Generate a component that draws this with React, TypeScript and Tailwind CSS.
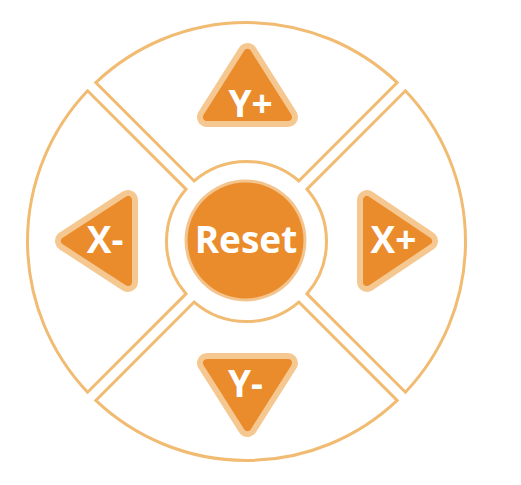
import React from "react";

const CX = 246.5;
const CY = 241.5;
const R_OUT = 219;
const R_IN = 80;
const GAP = 5.8;

// top quarter of the ring, the rest are rotations of it
function segmentPath() {
  const s = Math.SQRT1_2;
  const T = Math.sqrt(R_OUT * R_OUT - GAP * GAP);
  const t = Math.sqrt(R_IN * R_IN - GAP * GAP);
  const p = (x: number, y: number) => `${(CX + x).toFixed(2)} ${(CY + y).toFixed(2)}`;
  return [
    `M ${p((GAP - T) * s, (-GAP - T) * s)}`,
    `A ${R_OUT} ${R_OUT} 0 0 1 ${p((T - GAP) * s, (-GAP - T) * s)}`,
    `L ${p((t - GAP) * s, (-GAP - t) * s)}`,
    `A ${R_IN} ${R_IN} 0 0 0 ${p((GAP - t) * s, (-GAP - t) * s)}`,
    "Z",
  ].join(" ");
}

const arrows = [
  { label: "Y+", pts: "207,117 288,117 247.5,53", tx: 250.5, ty: 117 },
  { label: "Y-", pts: "207,363 288,363 247.5,427", tx: 245.5, ty: 397 },
  { label: "X-", pts: "65,241 128,200 128,282", tx: 105, ty: 253 },
  { label: "X+", pts: "367,200 367,282 428,241", tx: 393.5, ty: 253 },
];

const font = { fontFamily: "'Open Sans', 'Noto Sans', sans-serif" };

function App() {
  const seg = segmentPath();
  return (
    <div className="w-[521px] h-[485px] bg-white">
      <svg width="521" height="485" viewBox="0 0 521 485" className="block">
        {/* ring segments */}
        {[0, 90, 180, 270].map((deg) => (
          <path
            key={deg}
            d={seg}
            transform={`rotate(${deg} ${CX} ${CY})`}
            fill="none"
            stroke="#f1bb72"
            strokeWidth={3}
            strokeLinejoin="miter"
          />
        ))}

        {/* arrow buttons */}
        {arrows.map((a) => (
          <g key={a.label} className="cursor-pointer">
            <polygon points={a.pts} fill="#f5c891" stroke="#f5c891" strokeWidth={20} strokeLinejoin="round" />
            <polygon points={a.pts} fill="#ea8c2c" stroke="#ea8c2c" strokeWidth={8} strokeLinejoin="round" />
            <text
              x={a.tx}
              y={a.ty}
              textAnchor="middle"
              fill="#ffffff"
              className="font-bold"
              style={font}
              fontSize={37}
            >
              {a.label}
            </text>
          </g>
        ))}

        {/* reset */}
        <g className="cursor-pointer">
          <circle cx={CX - 1} cy={CY - 1} r={61} fill="#f3c48e" />
          <circle cx={CX - 1} cy={CY - 1} r={58} fill="#ea8c2c" />
          <text
            x={CX - 0.5}
            y={253}
            textAnchor="middle"
            fill="#ffffff"
            className="font-bold"
            style={font}
            fontSize={37}
          >
            Reset
          </text>
        </g>
      </svg>
    </div>
  );
}

export default App;
